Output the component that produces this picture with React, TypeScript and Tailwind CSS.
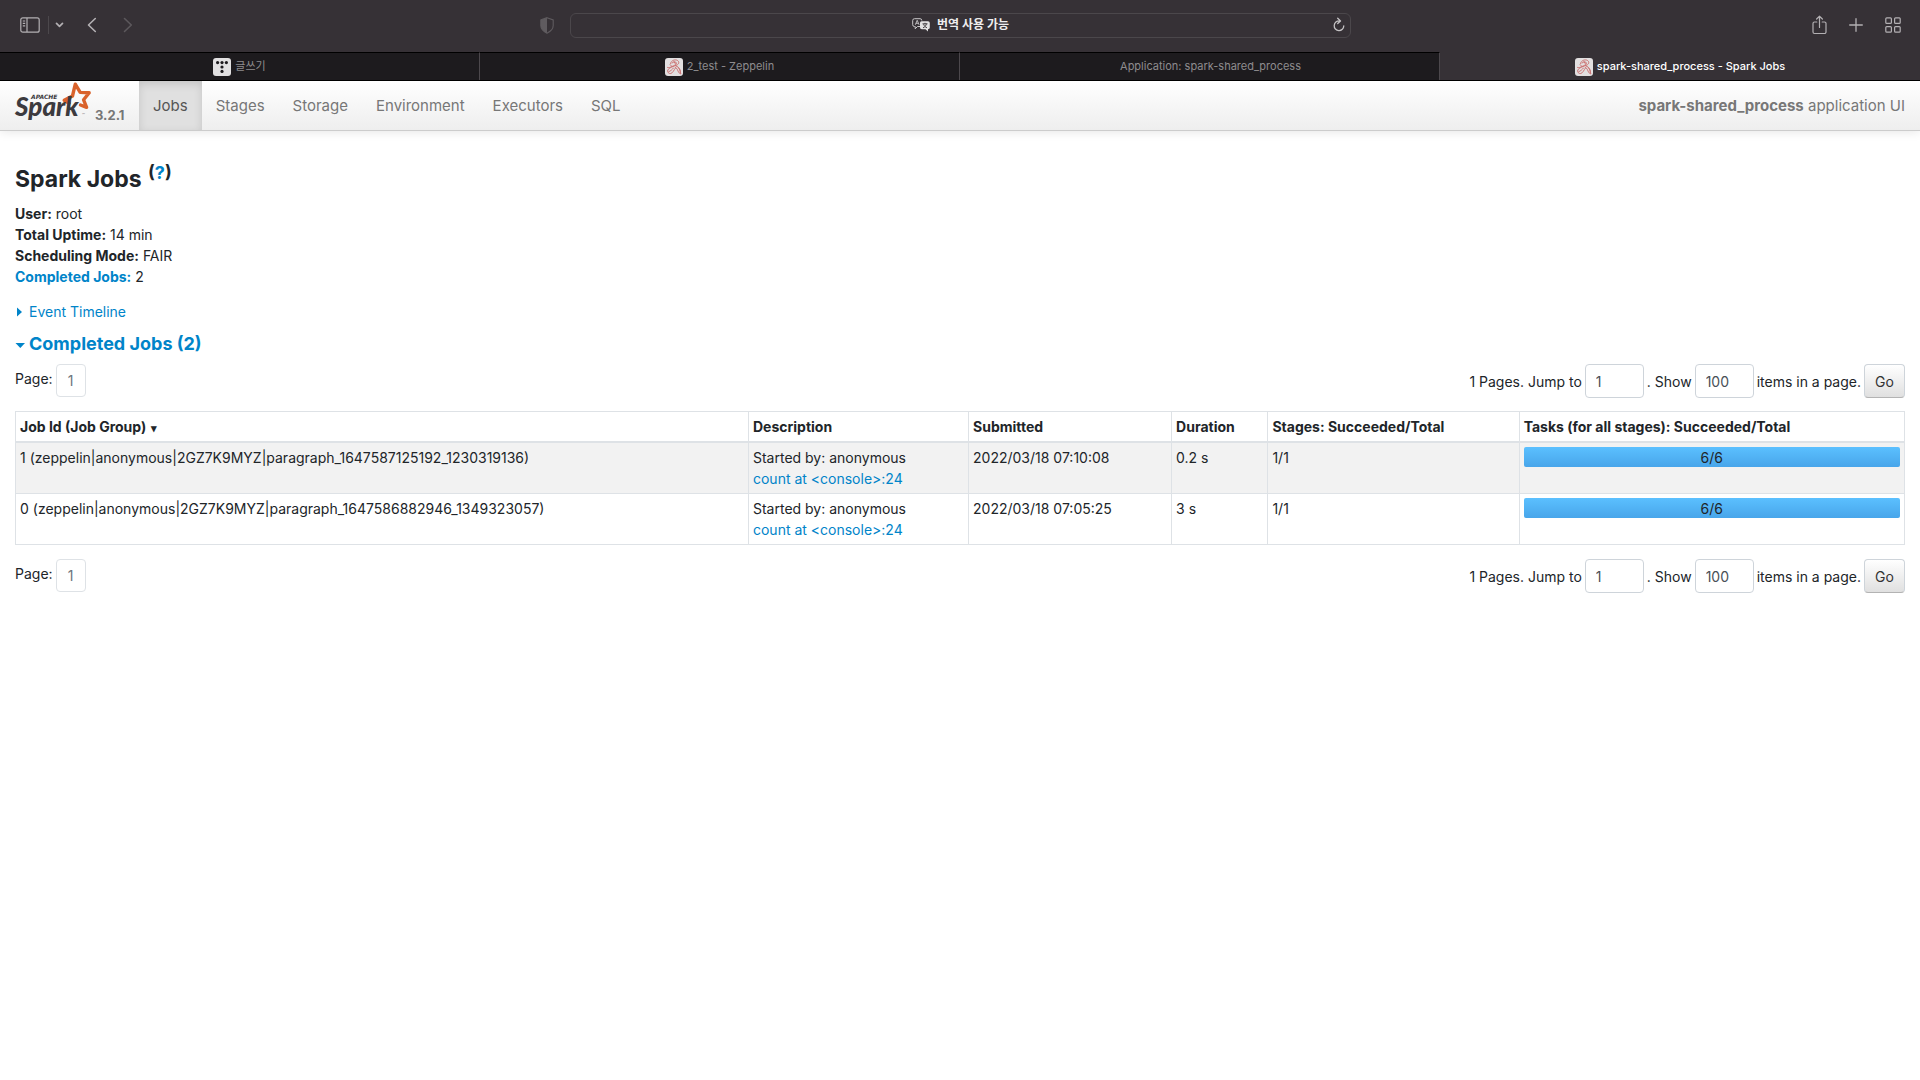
import { useState } from 'react';
import type { ReactNode } from 'react';

interface Job {
  id: string;
  group: string;
  startedBy: string;
  action: string;
  submitted: string;
  duration: string;
  stages: string;
  done: number;
  total: number;
}

const JOBS: Job[] = [
  {
    id: '1',
    group: 'zeppelin|anonymous|2GZ7K9MYZ|paragraph_1647587125192_1230319136',
    startedBy: 'anonymous',
    action: 'count at <console>:24',
    submitted: '2022/03/18 07:10:08',
    duration: '0.2 s',
    stages: '1/1',
    done: 6,
    total: 6,
  },
  {
    id: '0',
    group: 'zeppelin|anonymous|2GZ7K9MYZ|paragraph_1647586882946_1349323057',
    startedBy: 'anonymous',
    action: 'count at <console>:24',
    submitted: '2022/03/18 07:05:25',
    duration: '3 s',
    stages: '1/1',
    done: 6,
    total: 6,
  },
];

const NAV = ['Jobs', 'Stages', 'Storage', 'Environment', 'Executors', 'SQL'];

export default function App() {
  return (
    <div className="min-h-screen bg-white text-sm leading-[21px] text-[#212529] font-['Inter','Noto_Sans_CJK_KR',sans-serif]">
      <BrowserToolbar />
      <BrowserTabs />
      <Navbar />
      <main className="px-[15px] pt-8">
        <h3 className="mb-2 text-[23px] leading-[32px] font-bold">
          Spark Jobs{' '}
          <sup className="-top-2 ml-px text-lg leading-none">
            (
            <a href="#help" className="text-[#0084c9]">
              ?
            </a>
            )
          </sup>
        </h3>
        <ul>
          <Summary label="User:" value="root" />
          <Summary label="Total Uptime:" value="14 min" />
          <Summary label="Scheduling Mode:" value="FAIR" />
          <li>
            <a href="#completed" className="font-bold text-[#0084c9]">
              Completed Jobs:
            </a>{' '}
            2
          </li>
        </ul>

        <button className="mt-[14px] flex items-center text-[#0084c9]">
          <svg viewBox="0 0 14 10" className="h-[10px] w-[14px]" fill="currentColor">
            <path d="M2 0.5v9l5-4.5z" />
          </svg>
          Event Timeline
        </button>
        <h4 id="completed" className="mt-[10px] text-lg leading-6 font-bold text-[#0084c9]">
          <button className="flex items-center">
            <svg viewBox="0 0 14 10" className="h-[10px] w-[14px]" fill="currentColor">
              <path d="M0.5 4h9.5l-4.7 5z" />
            </svg>
            Completed Jobs (2)
          </button>
        </h4>

        <Pagination name="top" />
        <JobTable />
        <Pagination name="bottom" />
      </main>
    </div>
  );
}

function BrowserToolbar() {
  return (
    <div className="flex h-[52px] items-center bg-[#363136] pb-3 pt-[10px] text-[#b3b0b3]">
      <div className="flex flex-1 items-center pl-5">
        <button aria-label="Sidebar">
          <svg viewBox="0 0 20 16" className="h-4 w-5" fill="none" stroke="currentColor" strokeWidth="1.2">
            <rect x="0.8" y="0.8" width="18.4" height="14.4" rx="2" />
            <path d="M7 1v14M2.8 4h2.4M2.8 6.4h2.4M2.8 8.8h2.4" />
          </svg>
        </button>
        <span className="ml-2 h-[18px] w-px bg-[#4c484c]" />
        <button aria-label="Tab groups" className="ml-[6px]">
          <svg viewBox="0 0 9 6" className="h-[6px] w-[9px]" fill="none" stroke="currentColor" strokeWidth="1.7" strokeLinecap="round" strokeLinejoin="round">
            <path d="M1.5 1.3l3 3 3-3" />
          </svg>
        </button>
        <button aria-label="Back" className="ml-[23px]">
          <svg viewBox="0 0 10 16" className="h-4 w-[10px]" fill="none" stroke="currentColor" strokeWidth="1.6" strokeLinecap="round" strokeLinejoin="round">
            <path d="M8.3 1.5L1.5 8l6.8 6.5" />
          </svg>
        </button>
        <button aria-label="Forward" className="ml-[26px] text-[#5c585c]">
          <svg viewBox="0 0 10 16" className="h-4 w-[10px]" fill="none" stroke="currentColor" strokeWidth="1.6" strokeLinecap="round" strokeLinejoin="round">
            <path d="M1.5 1.5L8.3 8l-6.8 6.5" />
          </svg>
        </button>
        <button aria-label="Privacy report" className="mr-4 ml-auto text-[#5f5b5f]">
          <svg viewBox="0 0 14 17" className="h-[17px] w-[14px]">
            <path d="M7 0.7L13.2 3v5.6c0 3.4-2.7 5.9-6.2 7.6C3.5 14.5 0.8 12 0.8 8.6V3z" fill="none" stroke="currentColor" strokeWidth="1.1" />
            <path d="M7 0.7L0.8 3v5.6c0 3.4 2.7 5.9 6.2 7.6z" fill="currentColor" />
          </svg>
        </button>
      </div>
      <div className="flex h-[25px] w-[40.7%] items-center rounded-md border border-[#4b474b] px-[5px]">
        <button className="flex flex-1 items-center justify-center gap-[7px] pl-3 text-xs font-bold text-[#eeedee]">
          <svg viewBox="0 0 18 14" className="h-[14px] w-[18px]">
            <path d="M8 8.5H5.5L3.2 10.8V8.5H2.5A1.8 1.8 0 0 1 0.7 6.7V2.5A1.8 1.8 0 0 1 2.5 0.7H8A1.8 1.8 0 0 1 9.8 2.5" fill="none" stroke="#c9c7c9" strokeWidth="1" />
            <path d="M3.3 6.8L5.2 2.3 7.1 6.8M4 5.3H6.4" fill="none" stroke="#c9c7c9" strokeWidth="0.9" />
            <path d="M9.5 3.3H16A1.8 1.8 0 0 1 17.8 5.1V9.5A1.8 1.8 0 0 1 16 11.3V13.6L13.5 11.3H9.8A1.8 1.8 0 0 1 8 9.5V5A1.7 1.7 0 0 1 9.5 3.3z" fill="#e3e2e3" />
            <path d="M10.5 5.8h5M13 4.8v1M11 9.8c1.8-.7 3-2 3.4-4M11.6 6.2c.5 1.6 1.7 2.9 3.4 3.6" fill="none" stroke="#363136" strokeWidth="0.9" />
          </svg>
          번역 사용 가능
        </button>
        <button aria-label="Reload">
          <svg viewBox="0 0 12 16" className="h-4 w-3" fill="none" stroke="#c4c2c4" strokeWidth="1.3" strokeLinecap="round" strokeLinejoin="round">
            <path d="M6.5 4A4.8 4.8 0 1 0 10.8 8.8M4.7 1.3L7.5 4 4.7 6.6" />
          </svg>
        </button>
      </div>
      <div className="flex flex-1 items-center justify-end gap-[22px] pr-[19px]">
        <button aria-label="Share">
          <svg viewBox="0 0 15 20" className="h-5 w-[15px]" fill="none" stroke="currentColor" strokeWidth="1.2" strokeLinecap="round" strokeLinejoin="round">
            <path d="M4.8 7H2.5A1.5 1.5 0 0 0 1 8.5v8.5a1.5 1.5 0 0 0 1.5 1.5h10a1.5 1.5 0 0 0 1.5-1.5V8.5A1.5 1.5 0 0 0 12.5 7H10.2M7.5 12.5V1.2M4.6 4L7.5 1.2 10.4 4" />
          </svg>
        </button>
        <button aria-label="New tab">
          <svg viewBox="0 0 14 14" className="h-[14px] w-[14px]" fill="none" stroke="currentColor" strokeWidth="1.3" strokeLinecap="round">
            <path d="M7 0.7v12.6M0.7 7h12.6" />
          </svg>
        </button>
        <button aria-label="Tab overview">
          <svg viewBox="0 0 16 16" className="h-4 w-4" fill="none" stroke="currentColor" strokeWidth="1.2">
            <rect x="0.8" y="0.8" width="5.6" height="5.6" rx="1" />
            <rect x="9.6" y="0.8" width="5.6" height="5.6" rx="1" />
            <rect x="0.8" y="9.6" width="5.6" height="5.6" rx="1" />
            <rect x="9.6" y="9.6" width="5.6" height="5.6" rx="1" />
          </svg>
        </button>
      </div>
    </div>
  );
}

function BrowserTabs() {
  return (
    <div className="grid h-[29px] grid-cols-4 border-b border-black text-[11px]">
      <BrowserTab title="글쓰기" icon={<TistoryIcon />} />
      <BrowserTab title="2_test - Zeppelin" icon={<NotebookIcon />} />
      <BrowserTab title="Application: spark-shared_process" icon={<span className="w-[18px]" />} />
      <BrowserTab title="spark-shared_process - Spark Jobs" icon={<NotebookIcon />} active />
    </div>
  );
}

function BrowserTab({ title, icon, active }: { title: string; icon: ReactNode; active?: boolean }) {
  return (
    <button
      className={`flex items-center justify-center gap-1 border-t ${
        active
          ? 'border-t-[#363136] bg-[#363136] font-medium text-white'
          : 'border-r border-t-black border-r-[#4c484c] bg-[#1d1b1e] text-[#8e8c8e]'
      }`}
    >
      {icon}
      {title}
    </button>
  );
}

function TistoryIcon() {
  return (
    <svg viewBox="0 0 18 18" className="h-[18px] w-[18px]">
      <rect width="18" height="18" rx="3" fill="#e2e1e2" />
      <g fill="#1d1b1e">
        <circle cx="4.6" cy="4.6" r="1.6" />
        <circle cx="9" cy="4.6" r="1.6" />
        <circle cx="13.4" cy="4.6" r="1.6" />
        <circle cx="9" cy="9" r="1.6" />
        <circle cx="9" cy="13.4" r="1.6" />
      </g>
    </svg>
  );
}

function NotebookIcon() {
  return (
    <svg viewBox="0 0 18 18" className="h-[18px] w-[18px]">
      <rect width="18" height="18" rx="3" fill="#e2dfe0" />
      <g fill="none" stroke="#c96a6a" strokeWidth="0.9" strokeLinecap="round">
        <path d="M5.5 5.5C6 2.5 10 1 12.5 2.5c2 1.3 1.5 3.5-.5 4.5C8.5 8.5 4 9.5 2.8 12c-.8 2 1 4 3 3.5 2.2-.6 3-3.5 4.7-5.5" />
        <path d="M7 5c1.5-1.5 4-1.5 4.5 0S9 7.500 7 8.500 3.500 10 2.500 9.500M4 13.500c1.500 0 3-2 4.500-3.500" />
        <path d="M11 8c2 .5 3.500 2 4 4s.5 3 1 4c-1.500-.5-2.500-1.500-3-3s-1.500-3-2.500-3.500M13 9.500c1.500 1 2.500 3 2.300 5M5 6.500l1.500 1.500M9 3.500L10.500 6" />
      </g>
    </svg>
  );
}

function SparkLogo() {
  return (
    <svg viewBox="0 0 78 42" className="h-[42px] w-[78px]" role="img" aria-label="Apache Spark">
      <path
        d="M55 22.2L50.2 19.3 58.5 15 61.3 3.2 66.2 11.4 75.2 11.8 69.6 18.8 72.6 26.4 66.5 24"
        fill="none"
        stroke="#d9622b"
        strokeWidth="3.4"
        strokeLinejoin="round"
        strokeLinecap="round"
      />
      <text x="17" y="18" className="fill-[#3c3a3e] font-['DejaVu_Sans',sans-serif] text-[6px] font-bold italic">
        APACHE
      </text>
      <text x="1" y="35" className="fill-[#3c3a3e] font-['Lato',sans-serif] text-[26px] font-black italic">
        Spark
      </text>
      <text x="68" y="35" className="fill-[#8a888a] font-['Lato',sans-serif] text-[4px]">
        ™
      </text>
    </svg>
  );
}

function Navbar() {
  const [tab, setTab] = useState('Jobs');

  return (
    <nav className="flex h-[50px] items-stretch border-b border-[#cccccc] bg-linear-to-b from-white to-[#eeeeee] pr-[15px] pl-[14px] text-[15px] text-[#777777] shadow-[0_1px_10px_rgba(0,0,0,0.1)]">
      <a href="#home" className="flex w-[125px] items-start">
        <SparkLogo />
        <span className="mt-6 ml-[3px] text-[13px] font-bold">3.2.1</span>
      </a>
      {NAV.map((item) => (
        <button
          key={item}
          onClick={() => setTab(item)}
          className={`px-[14px] ${
            tab === item ? 'bg-[#e0e0e0] text-[#555555] shadow-[inset_0_3px_8px_rgba(0,0,0,0.125)]' : ''
          }`}
        >
          {item}
        </button>
      ))}
      <p className="ml-auto self-center">
        <strong>spark-shared_process</strong> application UI
      </p>
    </nav>
  );
}

function Summary({ label, value }: { label: string; value: string }) {
  return (
    <li>
      <strong>{label}</strong> {value}
    </li>
  );
}

function Pagination({ name }: { name: string }) {
  const input = 'h-[34px] w-[59px] rounded border border-[#ced4da] bg-white pl-[10px] text-[#495057]';

  return (
    <div className="mt-2 mb-[13px] flex items-start justify-between last:mt-[14px]">
      <div className="flex">
        <span className="mt-1">Page:</span>
        <a href="#page-1" className="ml-[3px] flex h-[33px] w-[30px] items-center justify-center rounded border border-[#dee2e6] text-[#6c757d]">
          1
        </a>
      </div>
      <form className="flex items-center gap-[3px]" onSubmit={(e) => e.preventDefault()}>
        <label htmlFor={`${name}-page`}>1 Pages. Jump to</label>
        <input id={`${name}-page`} type="text" defaultValue="1" className={input} />
        <label htmlFor={`${name}-size`}>. Show</label>
        <input id={`${name}-size`} type="text" defaultValue="100" className={input} />
        <span>items in a page.</span>
        <button className="h-[34px] w-[41px] rounded border border-[#ced4da] border-b-[#b3b3b3] bg-linear-to-b from-white to-[#e0e0e0] text-[#333333]">
          Go
        </button>
      </form>
    </div>
  );
}

function JobTable() {
  const cell = 'border border-[#dee2e6] p-1 align-top';
  const head = 'border border-b-2 border-[#dee2e6] p-1 text-left font-bold';

  return (
    <table className="w-full table-fixed border-collapse">
      <colgroup>
        <col />
        <col className="w-[11.65%]" />
        <col className="w-[10.75%]" />
        <col className="w-[5.1%]" />
        <col className="w-[13.3%]" />
        <col className="w-[20.4%]" />
      </colgroup>
      <thead>
        <tr>
          <th className={head}>
            Job Id (Job Group) <span className="ml-px text-[11px] leading-none">▾</span>
          </th>
          <th className={head}>Description</th>
          <th className={head}>Submitted</th>
          <th className={head}>Duration</th>
          <th className={head}>Stages: Succeeded/Total</th>
          <th className={head}>Tasks (for all stages): Succeeded/Total</th>
        </tr>
      </thead>
      <tbody>
        {JOBS.map((job) => (
          <tr key={job.id} className="odd:bg-[#f2f2f2]">
            <td className={cell}>
              {job.id} ({job.group})
            </td>
            <td className={cell}>
              <p>Started by: {job.startedBy}</p>
              <a href="#job" className="text-[#0084c9]">
                {job.action}
              </a>
            </td>
            <td className={cell}>{job.submitted}</td>
            <td className={cell}>{job.duration}</td>
            <td className={cell}>{job.stages}</td>
            <td className={cell}>
              <div className="grid h-5 overflow-hidden rounded-xs bg-[#e9ecef]">
                <div
                  className="col-start-1 row-start-1 bg-linear-to-b from-[#5bc0ff] to-[#47a4e9]"
                  style={{ width: `${(job.done / job.total) * 100}%` }}
                />
                <span className="col-start-1 row-start-1 text-center">
                  {job.done}/{job.total}
                </span>
              </div>
            </td>
          </tr>
        ))}
      </tbody>
    </table>
  );
}
